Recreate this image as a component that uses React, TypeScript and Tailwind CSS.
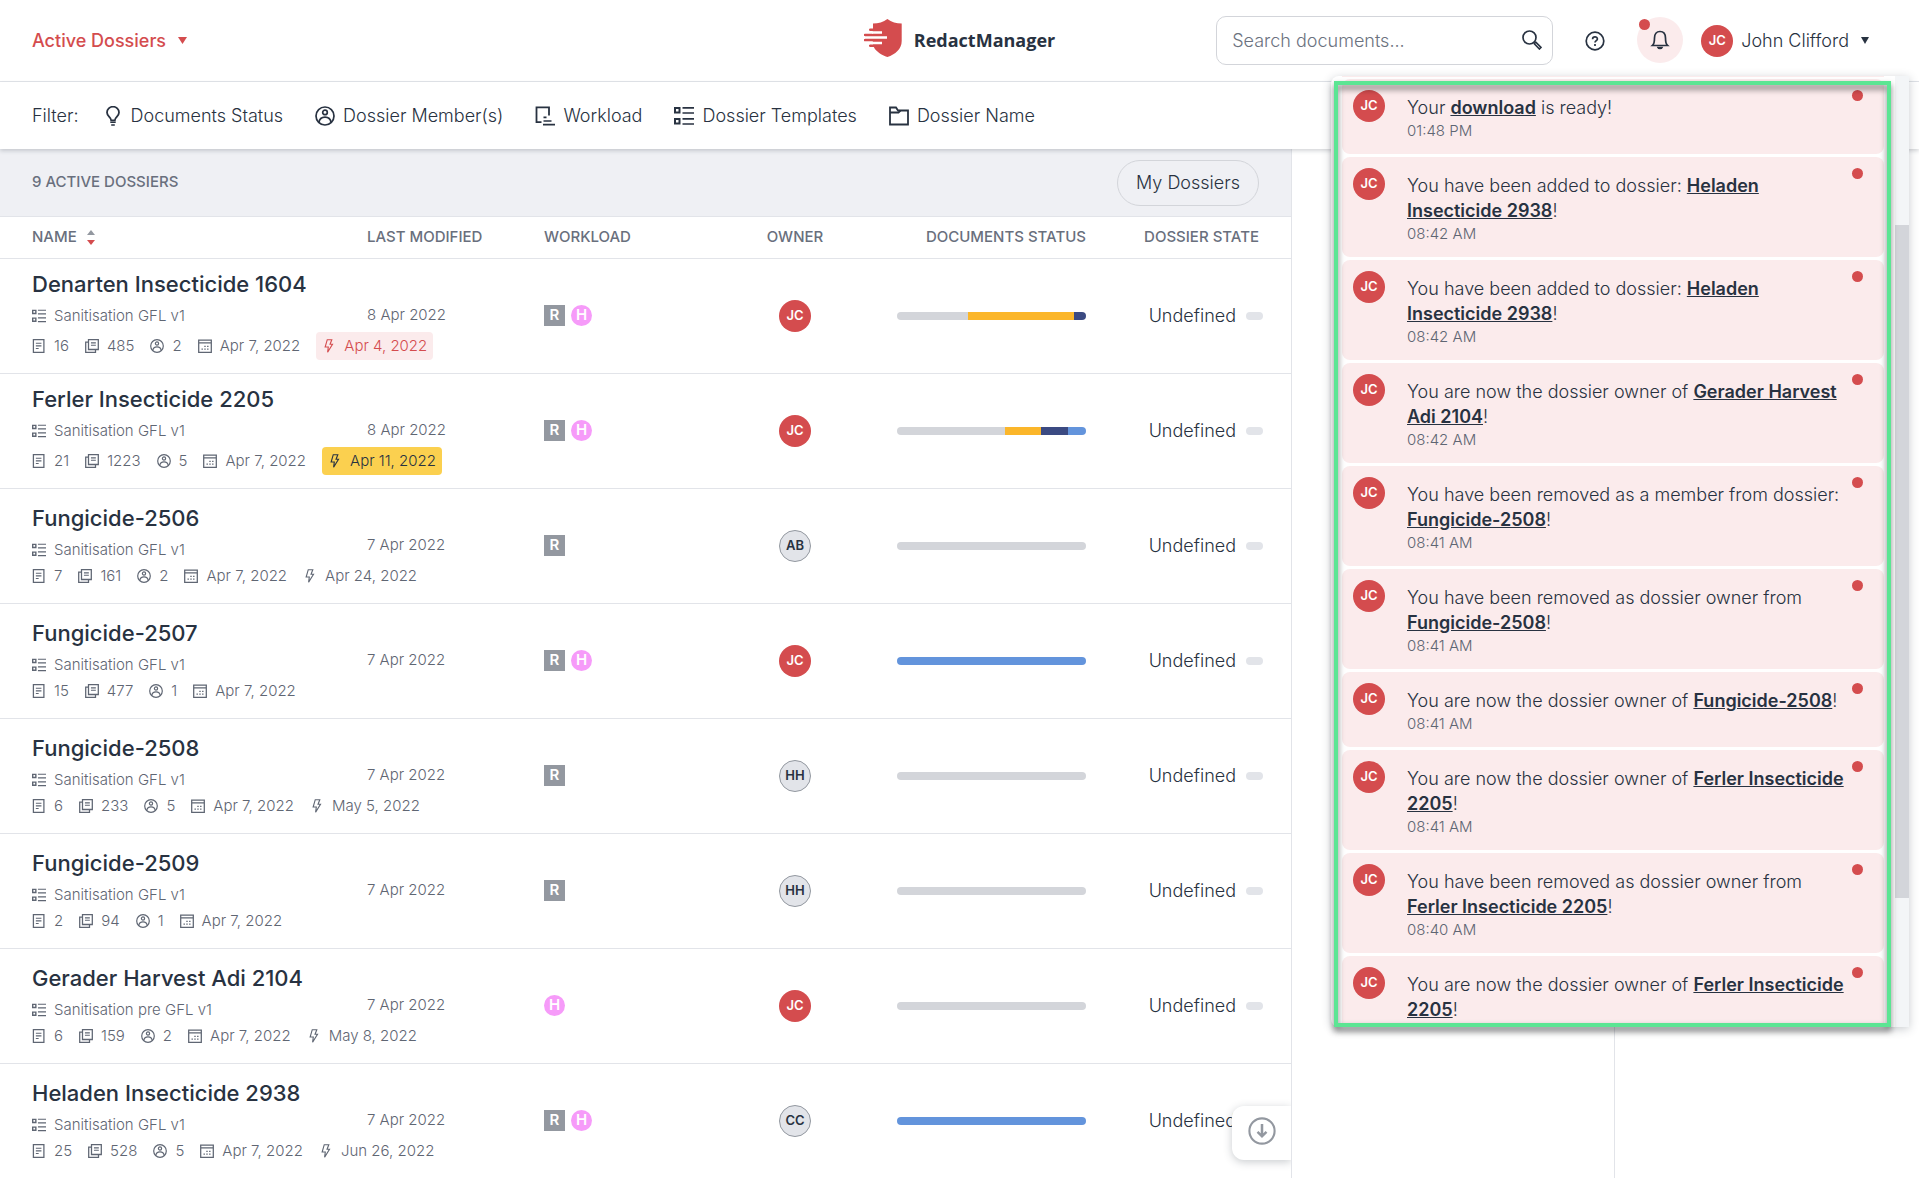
import type { ReactNode } from "react";
import clsx from "clsx";

type Segment = { color: string; size: number };

type Dossier = {
  name: string;
  template: string;
  modified: string;
  files: number;
  pages: number;
  members: number;
  created: string;
  due?: string;
  dueStyle?: "overdue" | "soon";
  workload: ("R" | "H")[];
  owner: string;
  status: Segment[];
};

const GRAY = "bg-[#d3d5da]";
const YELLOW = "bg-[#fbb62a]";
const NAVY = "bg-[#3b4a82]";
const BLUE = "bg-[#6394dc]";

const dossiers: Dossier[] = [
  {
    name: "Denarten Insecticide 1604",
    template: "Sanitisation GFL v1",
    modified: "8 Apr 2022",
    files: 16,
    pages: 485,
    members: 2,
    created: "Apr 7, 2022",
    due: "Apr 4, 2022",
    dueStyle: "overdue",
    workload: ["R", "H"],
    owner: "JC",
    status: [
      { color: GRAY, size: 6 },
      { color: YELLOW, size: 9 },
      { color: NAVY, size: 1 },
    ],
  },
  {
    name: "Ferler Insecticide 2205",
    template: "Sanitisation GFL v1",
    modified: "8 Apr 2022",
    files: 21,
    pages: 1223,
    members: 5,
    created: "Apr 7, 2022",
    due: "Apr 11, 2022",
    dueStyle: "soon",
    workload: ["R", "H"],
    owner: "JC",
    status: [
      { color: GRAY, size: 12 },
      { color: YELLOW, size: 4 },
      { color: NAVY, size: 3 },
      { color: BLUE, size: 2 },
    ],
  },
  {
    name: "Fungicide-2506",
    template: "Sanitisation GFL v1",
    modified: "7 Apr 2022",
    files: 7,
    pages: 161,
    members: 2,
    created: "Apr 7, 2022",
    due: "Apr 24, 2022",
    workload: ["R"],
    owner: "AB",
    status: [{ color: GRAY, size: 7 }],
  },
  {
    name: "Fungicide-2507",
    template: "Sanitisation GFL v1",
    modified: "7 Apr 2022",
    files: 15,
    pages: 477,
    members: 1,
    created: "Apr 7, 2022",
    workload: ["R", "H"],
    owner: "JC",
    status: [{ color: BLUE, size: 15 }],
  },
  {
    name: "Fungicide-2508",
    template: "Sanitisation GFL v1",
    modified: "7 Apr 2022",
    files: 6,
    pages: 233,
    members: 5,
    created: "Apr 7, 2022",
    due: "May 5, 2022",
    workload: ["R"],
    owner: "HH",
    status: [{ color: GRAY, size: 6 }],
  },
  {
    name: "Fungicide-2509",
    template: "Sanitisation GFL v1",
    modified: "7 Apr 2022",
    files: 2,
    pages: 94,
    members: 1,
    created: "Apr 7, 2022",
    workload: ["R"],
    owner: "HH",
    status: [{ color: GRAY, size: 2 }],
  },
  {
    name: "Gerader Harvest Adi 2104",
    template: "Sanitisation pre GFL v1",
    modified: "7 Apr 2022",
    files: 6,
    pages: 159,
    members: 2,
    created: "Apr 7, 2022",
    due: "May 8, 2022",
    workload: ["H"],
    owner: "JC",
    status: [{ color: GRAY, size: 6 }],
  },
  {
    name: "Heladen Insecticide 2938",
    template: "Sanitisation GFL v1",
    modified: "7 Apr 2022",
    files: 25,
    pages: 528,
    members: 5,
    created: "Apr 7, 2022",
    due: "Jun 26, 2022",
    workload: ["R", "H"],
    owner: "CC",
    status: [{ color: BLUE, size: 25 }],
  },
];

const notifications = [
  { before: "Your ", link: "download", after: " is ready!", time: "01:48 PM" },
  { before: "You have been added to dossier: ", link: "Heladen Insecticide 2938", after: "!", time: "08:42 AM" },
  { before: "You have been added to dossier: ", link: "Heladen Insecticide 2938", after: "!", time: "08:42 AM" },
  { before: "You are now the dossier owner of ", link: "Gerader Harvest Adi 2104", after: "!", time: "08:42 AM" },
  { before: "You have been removed as a member from dossier: ", link: "Fungicide-2508", after: "!", time: "08:41 AM" },
  { before: "You have been removed as dossier owner from ", link: "Fungicide-2508", after: "!", time: "08:41 AM" },
  { before: "You are now the dossier owner of ", link: "Fungicide-2508", after: "!", time: "08:41 AM" },
  { before: "You are now the dossier owner of ", link: "Ferler Insecticide 2205", after: "!", time: "08:41 AM" },
  { before: "You have been removed as dossier owner from ", link: "Ferler Insecticide 2205", after: "!", time: "08:40 AM" },
  { before: "You are now the dossier owner of ", link: "Ferler Insecticide 2205", after: "!", time: "08:40 AM" },
];

/* ---------- icons ---------- */

function Icon({ className, children }: { className: string; children: ReactNode }) {
  return (
    <svg viewBox="0 0 20 20" fill="none" stroke="currentColor" strokeWidth="2" className={clsx("shrink-0", className)} aria-hidden="true">
      {children}
    </svg>
  );
}

function Logo() {
  return (
    <svg viewBox="0 0 38 38" className="mb-1.5 size-[38px] shrink-0" aria-hidden="true">
      <path
        fill="#d44c4e"
        d="M23.4 0c4 3 9 4.500 14.300 4.500V22c0 8-6.500 13.500-14.300 16C17.500 36 12 32.500 9.800 28H6.500a1.200 1.200 0 0 1-.5-2.500h2.700V22.300H1a1.200 1.200 0 0 1 0-2.500V17.200a1.200 1.200 0 0 1 0-2.500h7.700V12H6.200a1.200 1.200 0 0 1 0-2.400H9V4.500C14.400 4.500 19.400 3 23.400 0z"
      />
      <path stroke="#fff" strokeWidth="2.500" d="M8 13.400h10M0 18.500h23M8 24h10" />
    </svg>
  );
}

function BulbIcon() {
  return (
    <Icon className="size-5">
      <path d="M8.200 14.500c0-3.300-4.200-4-4.200-8a6 5.800 0 0 1 12 0c0 4-4.200 4.700-4.200 8z" strokeWidth="1.800" />
      <path d="M7.300 16.300h5.400M8.200 19h3.600" strokeWidth="1.300" />
    </Icon>
  );
}

function MemberIcon({ className }: { className: string }) {
  return (
    <Icon className={className}>
      <circle cx="10" cy="10" r="9" strokeWidth="1.700" />
      <circle cx="10" cy="6.400" r="2.300" strokeWidth="1.700" />
      <path d="M4 16.500c.4-3.600 2.900-5.300 6-5.300s5.600 1.700 6 5.300" strokeWidth="1.700" />
    </Icon>
  );
}

function WorkloadIcon() {
  return (
    <Icon className="size-5">
      <path d="M6.500 16.200H1.500V1.300h12.500V9.500" strokeWidth="1.800" />
      <path d="M8.500 11.300h3M8.500 15h8M8 18.700h12" strokeWidth="1.700" />
    </Icon>
  );
}

function TemplateIcon({ className }: { className: string }) {
  return (
    <Icon className={className}>
      <path d="M1 2h4.500v4.500H1zM1 13h4.500v4.500H1z" />
      <path d="M8.500 1.800H20M8.500 7H20M8.500 12.800H20M8.500 18H20" strokeWidth="1.700" />
    </Icon>
  );
}

function FolderIcon() {
  return (
    <Icon className="size-5">
      <path d="M1 18.500v-17h6l2 3h10v14z" strokeWidth="1.800" />
      <path d="M1 6.500h8.500l2-2" strokeWidth="1.800" />
    </Icon>
  );
}

function FileIcon() {
  return (
    <Icon className="size-3.5">
      <path d="M2 1h15v18H2z" strokeWidth="1.800" />
      <path d="M5.500 6h8M5.500 9.800h8M5.500 13.600h4" strokeWidth="1.500" />
    </Icon>
  );
}

function PagesIcon() {
  return (
    <Icon className="size-3.5">
      <path d="M5 1h14v14H5zM5 4.500H1V19h14v-4" strokeWidth="1.800" />
      <path d="M8.500 5.500h7M8.500 9h7" strokeWidth="1.500" />
    </Icon>
  );
}

function CalendarIcon() {
  return (
    <Icon className="size-3.5">
      <path d="M1 1.500h18V19H1zM1 5.500h18" strokeWidth="1.800" />
      <path d="M9 10.500h2M13 10.500h2M5 14.500h2M9 14.500h2M13 14.500h2" />
    </Icon>
  );
}

function BoltIcon() {
  return (
    <Icon className="size-3.5">
      <path d="M7.500 1h6.500l-2.500 6.500H15L8 19l1-7.500H4.500z" strokeWidth="1.600" />
    </Icon>
  );
}

function Caret({ className }: { className: string }) {
  return (
    <svg viewBox="0 0 10 8" fill="currentColor" preserveAspectRatio="none" className={clsx("shrink-0", className)} aria-hidden="true">
      <path d="M0 0h10L5 8z" />
    </svg>
  );
}

/* ---------- small parts ---------- */

function Avatar({ initials }: { initials: string }) {
  const mine = initials === "JC";
  return (
    <span
      className={clsx(
        "flex size-8 shrink-0 items-center justify-center rounded-full text-[13px] font-semibold",
        mine ? "bg-[#d44c4e] text-white" : "border border-[#9398a0] bg-[#e2e4e9] text-[#283241]"
      )}
    >
      {initials}
    </span>
  );
}

function Stat({ icon, children }: { icon: ReactNode; children: ReactNode }) {
  return (
    <span className="flex items-center gap-2">
      {icon}
      {children}
    </span>
  );
}

function FilterButton({ icon, label }: { icon: ReactNode; label: string }) {
  return (
    <button type="button" className="flex items-center gap-2">
      {icon}
      {label}
    </button>
  );
}

function DossierRow({ dossier }: { dossier: Dossier }) {
  return (
    <tr className="h-[115px] border-b border-[#e2e4e9]">
      <td className="pb-[3px] pl-8 text-[15px] leading-5 font-light whitespace-nowrap text-[#5f6673]">
        <a href="#dossier" className="block text-[22px] leading-[30px] font-medium text-[#283241]">
          {dossier.name}
        </a>
        <div className="mt-[7px] flex items-center gap-2">
          <TemplateIcon className="size-3.5" />
          {dossier.template}
        </div>
        <div className="mt-1.5 flex items-center gap-4">
          <Stat icon={<FileIcon />}>{dossier.files}</Stat>
          <Stat icon={<PagesIcon />}>{dossier.pages}</Stat>
          <Stat icon={<MemberIcon className="size-3.5" />}>{dossier.members}</Stat>
          <Stat icon={<CalendarIcon />}>{dossier.created}</Stat>
          {dossier.due && (
            <span
              className={clsx(
                "flex items-center gap-2 rounded",
                dossier.dueStyle && "px-1.5 py-1",
                dossier.dueStyle === "overdue" && "bg-[#fbebec] text-[#d44c4e]",
                dossier.dueStyle === "soon" && "bg-[#fbd04f] text-[#283241]"
              )}
            >
              <BoltIcon />
              {dossier.due}
            </span>
          )}
        </div>
      </td>
      <td className="text-[15px] font-light text-[#5f6673]">{dossier.modified}</td>
      <td>
        <div className="flex items-center gap-1.5">
          {dossier.workload.map((kind) => (
            <span
              key={kind}
              className={clsx(
                "flex size-[21px] items-center justify-center text-[15px] font-semibold text-white",
                kind === "R" ? "bg-[#9398a0]" : "rounded-full bg-[#f69bf9]"
              )}
            >
              {kind}
            </span>
          ))}
        </div>
      </td>
      <td>
        <div className="flex justify-center">
          <Avatar initials={dossier.owner} />
        </div>
      </td>
      <td className="pl-7">
        <div className="flex h-2 overflow-hidden rounded-full">
          {dossier.status.map((segment) => (
            <span key={segment.color} className={segment.color} style={{ flexGrow: segment.size }} />
          ))}
        </div>
      </td>
      <td className="pr-7">
        <div className="flex items-center justify-end gap-2.5 text-[18px] font-light text-[#283241]">
          Undefined
          <span className="h-2 w-[17px] rounded-full bg-[#e2e4e9]" />
        </div>
      </td>
    </tr>
  );
}

function Notifications() {
  return (
    <div className="absolute top-[76px] right-2.5 z-20 flex h-[calc(100vh-227px)] w-[578px] rounded-l-lg bg-white shadow-[0_2px_10px_rgba(40,50,65,0.25)]">
      <div className="min-w-0 flex-1 overflow-hidden rounded-l-lg px-[11px]">
        <div className="mb-0.5 h-px bg-[#fbebec]" />
        <ul className="flex flex-col gap-[3px]">
          {notifications.map((item, i) => (
            <li key={i} className="flex items-start rounded-lg bg-[#fbebec] pt-[11px] pr-[21px] pb-3 pl-[11px]">
              <Avatar initials="JC" />
              <div className="ml-[22px] min-w-0 flex-1 pt-[5px]">
                <p className="text-[18px] leading-[25px] font-light text-[#283241]">
                  {item.before}
                  <a href="#notification" className="font-semibold underline">
                    {item.link}
                  </a>
                  {item.after}
                </p>
                <p className="text-[15px] leading-[22px] font-light text-[#5f6673]">{item.time}</p>
              </div>
              <span className="ml-1 size-[11px] rounded-full bg-[#d44c4e]" />
            </li>
          ))}
        </ul>
      </div>
      <div className="w-3.5 bg-[#f3f5f7] pt-[149px]">
        <div className="h-[673px] bg-[#d3d5da]" />
      </div>
      {/* highlight frame */}
      <div className="pointer-events-none absolute top-[5px] right-[18px] bottom-0 left-[3px] border-4 border-[#5ce593] drop-shadow-[0_4px_3px_rgba(0,0,0,0.55)]" />
    </div>
  );
}

function Header() {
  return (
    <header className="relative grid h-[82px] grid-cols-[1fr_auto_1fr] items-center border-b border-[#e2e4e9] px-8">
      <button type="button" className="flex items-center gap-3 justify-self-start text-[18px] font-medium text-[#d44c4e]">
        Active Dossiers
        <Caret className="h-[7px] w-[9px]" />
      </button>

      <a href="#home" className="flex items-center gap-3 font-['Open_Sans',sans-serif] text-[18px] font-bold">
        <Logo />
        RedactManager
      </a>

      <div className="mr-[18px] flex items-center justify-self-end">
        <form className="flex h-[49px] w-[337px] items-center rounded-[10px] border border-[#d3d5da] pr-2.5 pl-[15px]">
          <input
            type="search"
            aria-label="Search documents"
            placeholder="Search documents..."
            className="min-w-0 flex-1 text-[18px] font-light outline-none placeholder:text-[#6b7280]"
          />
          <button type="submit" aria-label="Search" className="pb-0.5">
            <Icon className="size-5">
              <circle cx="7.500" cy="7.500" r="6.500" strokeWidth="1.700" />
              <path d="M12.300 13.700l1.500-1.500 5.200 5.200-1.600 1.600z" strokeWidth="1.600" />
            </Icon>
          </button>
        </form>
        <button type="button" aria-label="Help" className="ml-8">
          <Icon className="size-5">
            <circle cx="10" cy="10" r="8.800" strokeWidth="1.700" />
            <path d="M7.600 8.200c0-3 4.800-3 4.800-.2 0 1.700-2.400 1.700-2.400 3.600M10 13v2" strokeWidth="1.700" />
          </Icon>
        </button>
        <button type="button" aria-label="Notifications" className="relative mb-0.5 ml-8 flex size-[46px] items-center justify-center rounded-full bg-[#fbebec]">
          <Icon className="size-5">
            <path d="M2.500 15.500h15c-1.700-1.500-2-3-2-7.500 0-4-2-6.500-5.500-6.500S4.500 4 4.500 8c0 4.500-.3 6-2 7.500z" strokeWidth="1.700" />
            <path d="M8 17.500c.5 1.300 3.500 1.300 4 0z" strokeWidth="1.700" />
          </Icon>
          <span className="absolute top-0.5 left-0.5 size-[11px] rounded-full bg-[#d44c4e]" />
        </button>
        <button type="button" className="ml-[18px] flex items-center gap-2 text-[18px] font-light">
          <Avatar initials="JC" />
          John Clifford
          <Caret className="ml-1 h-[7px] w-2" />
        </button>
      </div>

      <Notifications />
    </header>
  );
}

export default function App() {
  return (
    <div className="flex h-screen flex-col overflow-hidden bg-white font-['Inter',sans-serif] text-[#283241]">
      <Header />

      <div className="relative z-10 flex h-[67px] shrink-0 items-center bg-white pl-8 text-[18px] font-light shadow-[0_2px_4px_rgba(40,50,65,0.2)]">
        <span className="mr-6">Filter:</span>
        <div className="flex items-center gap-8">
          <FilterButton icon={<BulbIcon />} label="Documents Status" />
          <FilterButton icon={<MemberIcon className="size-5" />} label="Dossier Member(s)" />
          <FilterButton icon={<WorkloadIcon />} label="Workload" />
          <FilterButton icon={<TemplateIcon className="size-5" />} label="Dossier Templates" />
          <FilterButton icon={<FolderIcon />} label="Dossier Name" />
        </div>
      </div>

      <div className="flex min-h-0 flex-1">
        <main className="relative min-w-0 flex-1 overflow-hidden border-r border-[#e2e4e9]">
          <div className="flex h-[68px] items-center justify-between border-b border-[#e2e4e9] bg-[#eff0f4] px-8">
            <h1 className="text-[15px] font-medium text-[#696f7d]">9 ACTIVE DOSSIERS</h1>
            <button type="button" className="h-[46px] rounded-full border border-[#d3d5da] px-[18px] text-[18px] font-light">
              My Dossiers
            </button>
          </div>

          <table className="w-full table-fixed">
            <colgroup>
              <col />
              <col className="w-[177px]" />
              <col className="w-[177px]" />
              <col className="w-[148px]" />
              <col className="w-[217px]" />
              <col className="w-[205px]" />
            </colgroup>
            <thead>
              <tr className="h-[41px] border-b border-[#e2e4e9] text-left text-[15px] text-[#696f7d]">
                <th className="pl-8 font-medium">
                  <button type="button" className="flex items-center gap-2.5">
                    NAME
                    <span className="flex flex-col gap-[5px]">
                      <Caret className="h-[5px] w-2 rotate-180 text-[#9398a0]" />
                      <Caret className="h-[5px] w-2 text-[#d44c4e]" />
                    </span>
                  </button>
                </th>
                <th className="font-medium">LAST MODIFIED</th>
                <th className="font-medium">WORKLOAD</th>
                <th className="text-center font-medium">OWNER</th>
                <th className="text-right font-medium">DOCUMENTS STATUS</th>
                <th className="pr-8 text-right font-medium">DOSSIER STATE</th>
              </tr>
            </thead>
            <tbody>
              {dossiers.map((dossier) => (
                <DossierRow key={dossier.name} dossier={dossier} />
              ))}
            </tbody>
          </table>

          <button
            type="button"
            aria-label="Scroll down"
            className="absolute right-0 bottom-[18px] flex h-[54px] w-[59px] items-center justify-center rounded-l-xl bg-white pb-1 text-[#9398a0] shadow-[0_2px_8px_rgba(40,50,65,0.25)]"
          >
            <Icon className="size-7">
              <circle cx="10" cy="10" r="9" strokeWidth="1.500" />
              <path d="M10 5v8.500M6.800 10.600l3.200 3.200 3.200-3.200" strokeWidth="1.800" />
            </Icon>
          </button>
        </main>

        <aside className="flex w-[627px] shrink-0">
          <div className="w-[323px] border-r border-[#e2e4e9]" />
        </aside>
      </div>
    </div>
  );
}
